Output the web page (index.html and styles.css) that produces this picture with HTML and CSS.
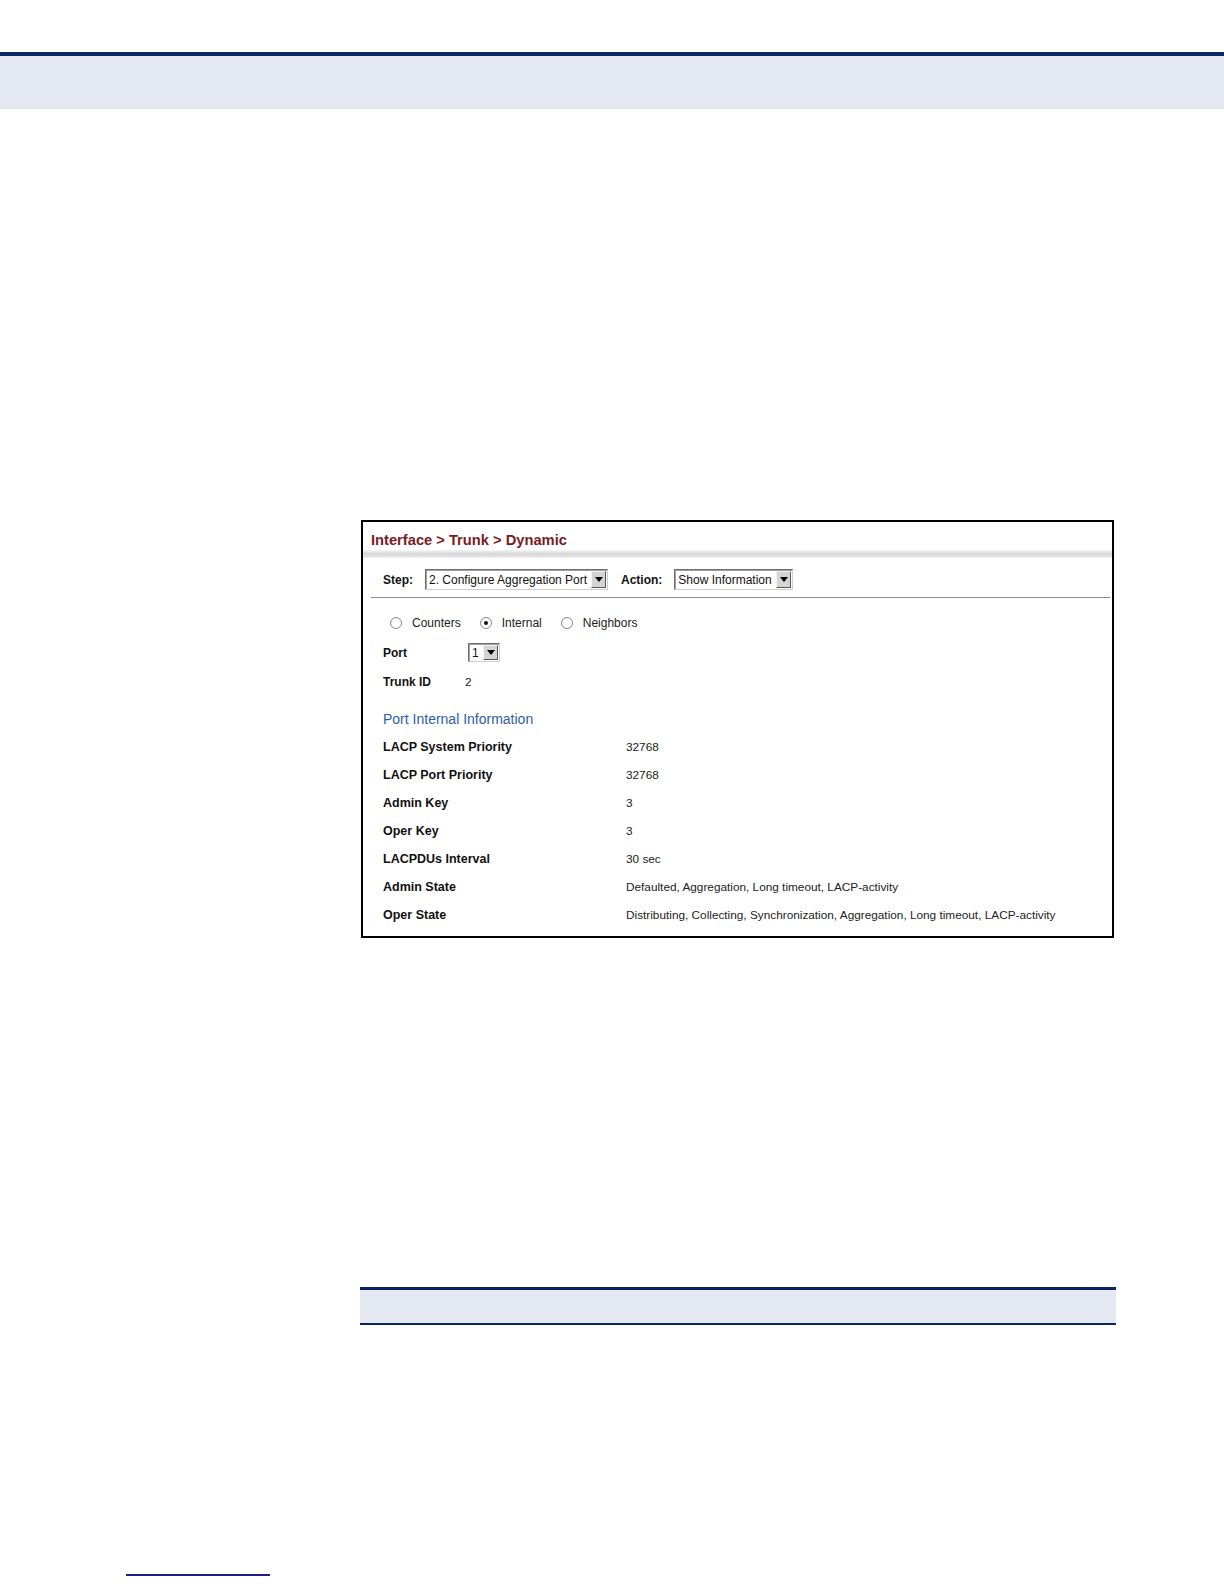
FILE: index.html
```html
<!DOCTYPE html>
<html>
<head>
<meta charset="utf-8">
<link rel="stylesheet" href="styles.css">
</head>
<body>
<div class="top-rule"></div>
<div class="top-band"></div>

<div class="figure">
  <div class="fig-title">Interface &gt; Trunk &gt; Dynamic</div>
  <div class="fig-shade"></div>
  <div class="step-row">
    <span class="lbl-b">Step:</span>
    <span class="select sel-step"><span class="sel-text">2. Configure Aggregation Port</span><span class="arrow"></span></span>
    <span class="lbl-b">Action:</span>
    <span class="select sel-action"><span class="sel-text">Show Information</span><span class="arrow"></span></span>
  </div>
  <div class="fig-body">
    <div class="radio-row">
      <span class="radio"></span><span class="radio-lbl">Counters</span>
      <span class="radio checked"></span><span class="radio-lbl">Internal</span>
      <span class="radio"></span><span class="radio-lbl">Neighbors</span>
    </div>
    <div class="port-row">
      <span class="port-lbl">Port</span>
      <span class="select sel-port"><span class="sel-text">1</span><span class="arrow"></span></span>
    </div>
    <div class="trunk-row">
      <span class="trunk-lbl">Trunk ID</span>
      <span class="val">2</span>
    </div>
    <div class="section-head">Port Internal Information</div>
    <div class="info">
      <div class="info-row"><span class="info-lbl">LACP System Priority</span><span class="val">32768</span></div>
      <div class="info-row"><span class="info-lbl">LACP Port Priority</span><span class="val">32768</span></div>
      <div class="info-row"><span class="info-lbl">Admin Key</span><span class="val">3</span></div>
      <div class="info-row"><span class="info-lbl">Oper Key</span><span class="val">3</span></div>
      <div class="info-row"><span class="info-lbl">LACPDUs Interval</span><span class="val">30 sec</span></div>
      <div class="info-row"><span class="info-lbl">Admin State</span><span class="val">Defaulted, Aggregation, Long timeout, LACP-activity</span></div>
      <div class="info-row"><span class="info-lbl">Oper State</span><span class="val">Distributing, Collecting, Synchronization, Aggregation, Long timeout, LACP-activity</span></div>
    </div>
  </div>
</div>

<div class="table-head"></div>

<div class="footer-rule"></div>
</body>
</html>
```

FILE: styles.css
```css
html, body {
  margin: 0;
  padding: 0;
  background: #ffffff;
  font-family: "Liberation Sans", Arial, sans-serif;
  color: #111;
}

.top-rule {
  margin-top: 52px;
  height: 4px;
  background: #0b2462;
}

.top-band {
  height: 53px;
  background: #e4e8f0;
}

.figure {
  box-sizing: border-box;
  margin-top: 411px;
  margin-left: 361px;
  width: 753px;
  border: 2px solid #000;
  background: #fff;
}

.fig-title {
  padding: 8px 0 0 8px;
  height: 20px;
  line-height: 20px;
  font-size: 14.7px;
  font-weight: bold;
  color: #7a1b24;
}

.fig-shade {
  height: 8px;
  background: linear-gradient(#f6f6f6, #d6d6d6 50%, #eeeeee);
}

.step-row {
  display: flex;
  align-items: center;
  height: 21px;
  padding: 11px 0 7px 12px;
  margin: 0 2px 0 8px;
  border-bottom: 1px solid #8c8c8c;
  font-size: 12px;
}

.lbl-b {
  font-weight: bold;
  margin-right: 12px;
}

.select {
  box-sizing: border-box;
  display: inline-flex;
  align-items: center;
  height: 21px;
  background: #fff;
  border: 1px solid;
  border-color: #6f6f6f #cfcfcf #cfcfcf #6f6f6f;
  box-shadow: inset 1px 1px 0 #a0a0a0;
  font-size: 12px;
  color: #111;
}

.sel-text {
  padding-left: 3px;
  white-space: nowrap;
}

.arrow {
  box-sizing: border-box;
  margin-left: auto;
  margin-right: 1px;
  width: 15px;
  height: 17px;
  background: #d4d4d4;
  border: 1px solid;
  border-color: #f4f4f4 #5a5a5a #5a5a5a #f4f4f4;
  display: flex;
  align-items: center;
  justify-content: center;
}

.arrow::after {
  content: "";
  width: 0;
  height: 0;
  border-left: 4px solid transparent;
  border-right: 4px solid transparent;
  border-top: 5px solid #000;
}

.sel-step {
  width: 183px;
  margin-right: 13px;
}

.sel-action {
  width: 119px;
}

.fig-body {
  padding: 17px 0 7px 20px;
  font-size: 12px;
}

.radio-row {
  display: flex;
  align-items: center;
  height: 16px;
}

.radio {
  box-sizing: border-box;
  width: 12px;
  height: 12px;
  border-radius: 50%;
  border: 1px solid #8a8a8a;
  background: radial-gradient(circle at 60% 60%, #ffffff 50%, #e2e2e2);
  margin-right: 10px;
  display: flex;
  align-items: center;
  justify-content: center;
}

.radio:first-child {
  margin-left: 7px;
}

.radio.checked::after {
  content: "";
  width: 4px;
  height: 4px;
  border-radius: 50%;
  background: #111;
}

.radio-lbl {
  color: #222;
  margin-right: 19px;
}

.port-row {
  display: flex;
  align-items: center;
  margin-top: 12px;
  height: 19px;
}

.port-lbl {
  width: 85px;
  font-weight: bold;
}

.sel-port {
  width: 32px;
  height: 19px;
}

.sel-port .arrow {
  height: 15px;
}

.trunk-row {
  display: flex;
  align-items: center;
  margin-top: 12px;
  height: 16px;
}

.trunk-lbl {
  width: 82px;
  font-weight: bold;
}

.section-head {
  margin-top: 20px;
  height: 18px;
  line-height: 18px;
  font-size: 14px;
  color: #2d5da6;
}

.info {
  margin-top: 5px;
}

.info-row {
  display: flex;
  align-items: center;
  height: 28px;
}

.info-lbl {
  width: 243px;
  font-size: 12.5px;
  font-weight: bold;
}

.val {
  font-size: 11.8px;
  color: #222;
}

.table-head {
  box-sizing: border-box;
  margin-top: 349px;
  margin-left: 360px;
  width: 756px;
  height: 38px;
  background: #e4e8f0;
  border-top: 3px solid #0b2462;
  border-bottom: 2px solid #0b2462;
}

.footer-rule {
  margin-top: 249px;
  margin-left: 126px;
  width: 144px;
  height: 2px;
  background: #1c1c8a;
}
```
